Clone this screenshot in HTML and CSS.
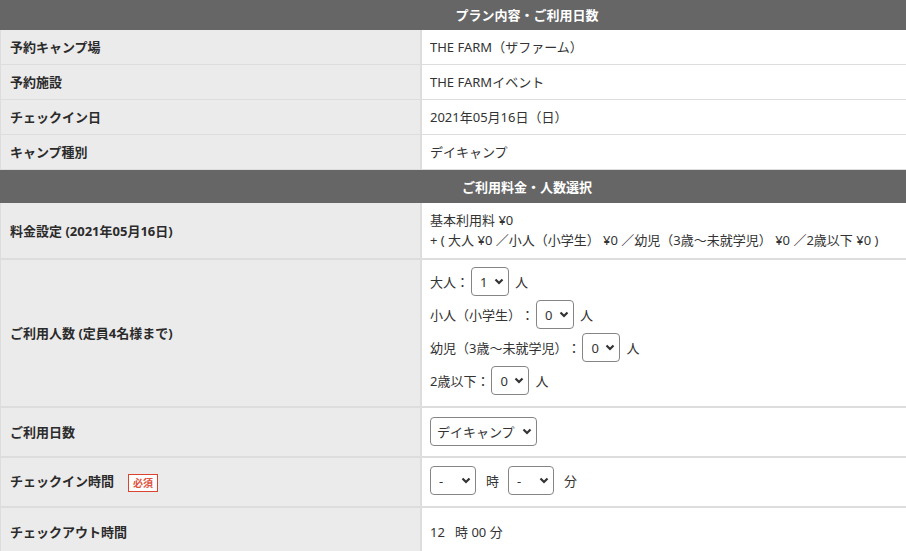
FILE: index.html
```html
<!DOCTYPE html>
<html lang="ja">

<head>
    <meta charset="UTF-8">
    <meta name="viewport" content="width=device-width, initial-scale=1.0">
    <title>予約内容</title>
    <link rel="stylesheet" href="styles.css">
</head>

<body>
    <div class="frame">
        <table class="form-table plan">
            <colgroup>
                <col class="col-label">
                <col>
            </colgroup>
            <tr>
                <th colspan="2">プラン内容・ご利用日数</th>
            </tr>
            <tr>
                <td class="label">予約キャンプ場</td>
                <td class="value">THE FARM（ザファーム）</td>
            </tr>
            <tr>
                <td class="label">予約施設</td>
                <td class="value">THE FARMイベント</td>
            </tr>
            <tr>
                <td class="label">チェックイン日</td>
                <td class="value">2021年05月16日（日）</td>
            </tr>
            <tr>
                <td class="label">キャンプ種別</td>
                <td class="value">デイキャンプ</td>
            </tr>
        </table>

        <table class="form-table price">
            <colgroup>
                <col class="col-label">
                <col>
            </colgroup>
            <tr>
                <th colspan="2">ご利用料金・人数選択</th>
            </tr>
            <tr class="row-fee">
                <td class="label">料金設定 (2021年05月16日)</td>
                <td class="value">基本利用料 ¥0<br>+ ( 大人 ¥0 ／小人（小学生） ¥0 ／幼児（3歳～未就学児） ¥0 ／2歳以下 ¥0 )</td>
            </tr>
            <tr class="row-people">
                <td class="label">ご利用人数 (定員4名様まで)</td>
                <td class="value">
                    <div class="count-line">
                        <span>大人：</span>
                        <span class="select-wrap">
                            <select class="sel-num"><option>1</option></select>
                            <svg class="chev" width="10" height="7" viewBox="0 0 10 7"><path d="M1.5 1.5 L5 5 L8.5 1.5" /></svg>
                        </span>
                        <span>人</span>
                    </div>
                    <div class="count-line">
                        <span>小人（小学生）：</span>
                        <span class="select-wrap">
                            <select class="sel-num"><option>0</option></select>
                            <svg class="chev" width="10" height="7" viewBox="0 0 10 7"><path d="M1.5 1.5 L5 5 L8.5 1.5" /></svg>
                        </span>
                        <span>人</span>
                    </div>
                    <div class="count-line">
                        <span>幼児（3歳～未就学児）：</span>
                        <span class="select-wrap">
                            <select class="sel-num"><option>0</option></select>
                            <svg class="chev" width="10" height="7" viewBox="0 0 10 7"><path d="M1.5 1.5 L5 5 L8.5 1.5" /></svg>
                        </span>
                        <span>人</span>
                    </div>
                    <div class="count-line">
                        <span>2歳以下：</span>
                        <span class="select-wrap">
                            <select class="sel-num"><option>0</option></select>
                            <svg class="chev" width="10" height="7" viewBox="0 0 10 7"><path d="M1.5 1.5 L5 5 L8.5 1.5" /></svg>
                        </span>
                        <span>人</span>
                    </div>
                </td>
            </tr>
            <tr class="row-days">
                <td class="label">ご利用日数</td>
                <td class="value">
                    <span class="select-wrap">
                        <select class="sel-day"><option>デイキャンプ</option></select>
                        <svg class="chev" width="10" height="7" viewBox="0 0 10 7"><path d="M1.5 1.5 L5 5 L8.5 1.5" /></svg>
                    </span>
                </td>
            </tr>
            <tr class="row-time">
                <td class="label">チェックイン時間<span class="required">必須</span></td>
                <td class="value">
                    <div class="time-line">
                        <span class="select-wrap">
                            <select class="sel-time"><option>-</option></select>
                            <svg class="chev" width="10" height="7" viewBox="0 0 10 7"><path d="M1.5 1.5 L5 5 L8.5 1.5" /></svg>
                        </span>
                        <span class="unit">時</span>
                        <span class="select-wrap">
                            <select class="sel-time"><option>-</option></select>
                            <svg class="chev" width="10" height="7" viewBox="0 0 10 7"><path d="M1.5 1.5 L5 5 L8.5 1.5" /></svg>
                        </span>
                        <span class="unit">分</span>
                    </div>
                </td>
            </tr>
            <tr class="row-out">
                <td class="label">チェックアウト時間</td>
                <td class="value">12&nbsp;&nbsp; 時 00 分</td>
            </tr>
        </table>
    </div>
</body>

</html>
```

FILE: styles.css
```css
html {
    overflow: hidden;
}

body {
    margin: 0;
    background: #fff;
    font-family: "Noto Sans", "Noto Sans CJK JP", sans-serif;
    font-size: 13px;
    color: #333;
    text-spacing-trim: space-all;
}

.frame {
    width: 1054px;
}

.form-table {
    width: 100%;
    border-spacing: 0;
    table-layout: fixed;
}

.form-table .col-label {
    width: 422px;
}

.form-table th {
    background: #666;
    color: #fff;
    font-weight: bold;
    text-align: center;
    line-height: 18px;
    padding: 6px;
}

.form-table td {
    line-height: 18px;
    vertical-align: middle;
    border-bottom: 1px solid #ddd;
}

.form-table td.label {
    box-sizing: border-box;
    background: #ebebeb;
    color: #2b2b2b;
    font-weight: bold;
    padding: 8px 9px;
    border-left: 1px solid #ddd;
    border-right: 2px solid #ddd;
}

.form-table td.value {
    padding: 8px 8px;
    background: #fff;
}

.price th {
    padding: 8px 6px 7px;
}

.price td {
    border-bottom-width: 2px;
}

.row-fee td.value {
    line-height: 20px;
    padding-top: 7px;
    padding-bottom: 8px;
}

.row-people td.value {
    padding-top: 7px;
    padding-bottom: 11px;
}

.count-line {
    display: flex;
    align-items: center;
    height: 29px;
}

.count-line + .count-line {
    margin-top: 4px;
}

.count-line .select-wrap {
    margin: 0 6px 0 2px;
}

.row-days td.value {
    padding-top: 9px;
    padding-bottom: 10px;
}

.row-time td.value {
    padding-top: 8px;
    padding-bottom: 11px;
}

.time-line {
    display: flex;
    align-items: center;
    height: 29px;
}

.time-line .unit {
    margin: 0 9px 0 10px;
}

.row-out td {
    padding-top: 15px !important;
    padding-bottom: 15px !important;
}

.select-wrap {
    position: relative;
    display: inline-block;
    vertical-align: middle;
}

.select-wrap select {
    appearance: none;
    -webkit-appearance: none;
    display: block;
    height: 29px;
    box-sizing: border-box;
    border: 1px solid #858585;
    border-radius: 4px;
    background: #fff;
    color: #333;
    font-family: "Noto Sans", "Noto Sans CJK JP", sans-serif;
    font-size: 13px;
    padding: 0 0 0 8px;
    margin: 0;
}

.sel-num {
    width: 38px;
}

.sel-time {
    width: 46px;
}

.sel-day {
    width: 107px;
    padding-left: 6px !important;
}

.chev {
    position: absolute;
    right: 5px;
    top: 11px;
    pointer-events: none;
}

.chev path {
    fill: none;
    stroke: #333;
    stroke-width: 2.2;
}

.required {
    display: inline-block;
    margin-left: 14px;
    padding: 0 4px;
    border: 1px solid #d9432f;
    background: #fff;
    color: #e0533f;
    font-size: 10px;
    line-height: 16px;
    vertical-align: middle;
}
```
